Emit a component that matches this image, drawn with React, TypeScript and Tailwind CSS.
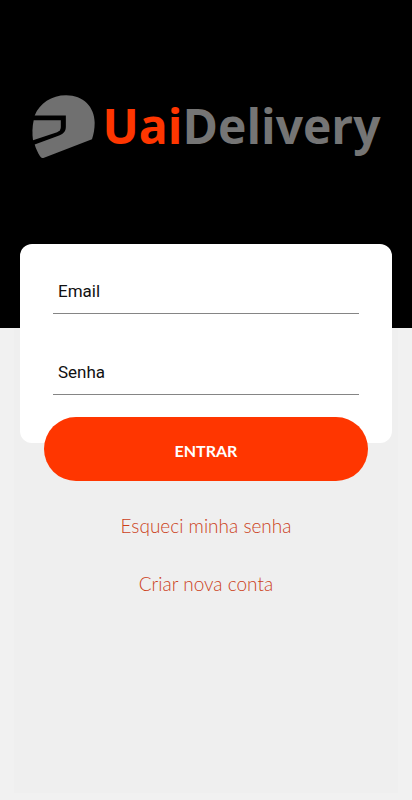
import type { InputHTMLAttributes } from 'react';

function HelmetIcon() {
  return (
    <svg viewBox="35 43 188 188" className="size-[63px] shrink-0 text-[#707070]" aria-hidden="true">
      <path
        d="M43 104 C58 68 93 44 137 44 C188 44 222 79 222 126 C222 145 219 161 214 175 L69 231 C64 232 62 230 59 226 C52 215 47 204 43 191 L116 164 C130 159 136 151 136 138 V104 Z"
        fill="currentColor"
      />
      <path
        d="M40 118 H121 V138 C121 147 117 151 110 154 L38 178 C35 158 36 136 40 118 Z"
        fill="currentColor"
      />
    </svg>
  );
}

function Logo() {
  return (
    <div className="flex items-center gap-2">
      <HelmetIcon />
      <h1 className="font-['Open_Sans',sans-serif] text-5xl leading-[64px] font-bold text-[#757575]">
        <span className="text-[#ff3600]">Uai</span>Delivery
      </h1>
    </div>
  );
}

function Field({ label, id, ...props }: { label: string; id: string } & InputHTMLAttributes<HTMLInputElement>) {
  return (
    <div className="flex h-[46px] items-center gap-2 border-b border-[#858585] px-[5px] pt-[3px] font-['Roboto',sans-serif] text-[17px] text-[#111111]">
      <label htmlFor={id}>{label}</label>
      <input id={id} className="h-full min-w-0 flex-1 bg-transparent outline-none" {...props} />
    </div>
  );
}

export default function App() {
  return (
    <main className="flex min-h-screen flex-col bg-[#f1f1f1] font-['Lato',sans-serif]">
      <header className="flex h-[328px] items-start justify-center bg-black pt-[94px]">
        <Logo />
      </header>

      <div className="flex flex-1 flex-col px-[14px] pb-[7px]">
        <div className="flex flex-1 flex-col bg-[#efefef]">
          <form className="-mt-[84px] flex flex-col px-[6px]" onSubmit={(e) => e.preventDefault()}>
            <div className="flex h-[199px] flex-col gap-[35px] rounded-xl bg-white px-[33px] pt-[24px]">
              <Field id="email" label="Email" type="email" />
              <Field id="senha" label="Senha" type="password" />
            </div>
            <button
              type="submit"
              className="mx-[24px] -mt-[26px] h-[64px] rounded-full bg-[#ff3600] pt-1 text-base font-bold text-white"
            >
              ENTRAR
            </button>
          </form>

          {/* Account links */}
          <nav className="mt-[31px] flex flex-col items-center gap-[30px] text-[19px] leading-[28px] font-light text-[#cc3f1a]">
            <a href="#senha">Esqueci minha senha</a>
            <a href="#conta">Criar nova conta</a>
          </nav>
        </div>
      </div>
    </main>
  );
}
